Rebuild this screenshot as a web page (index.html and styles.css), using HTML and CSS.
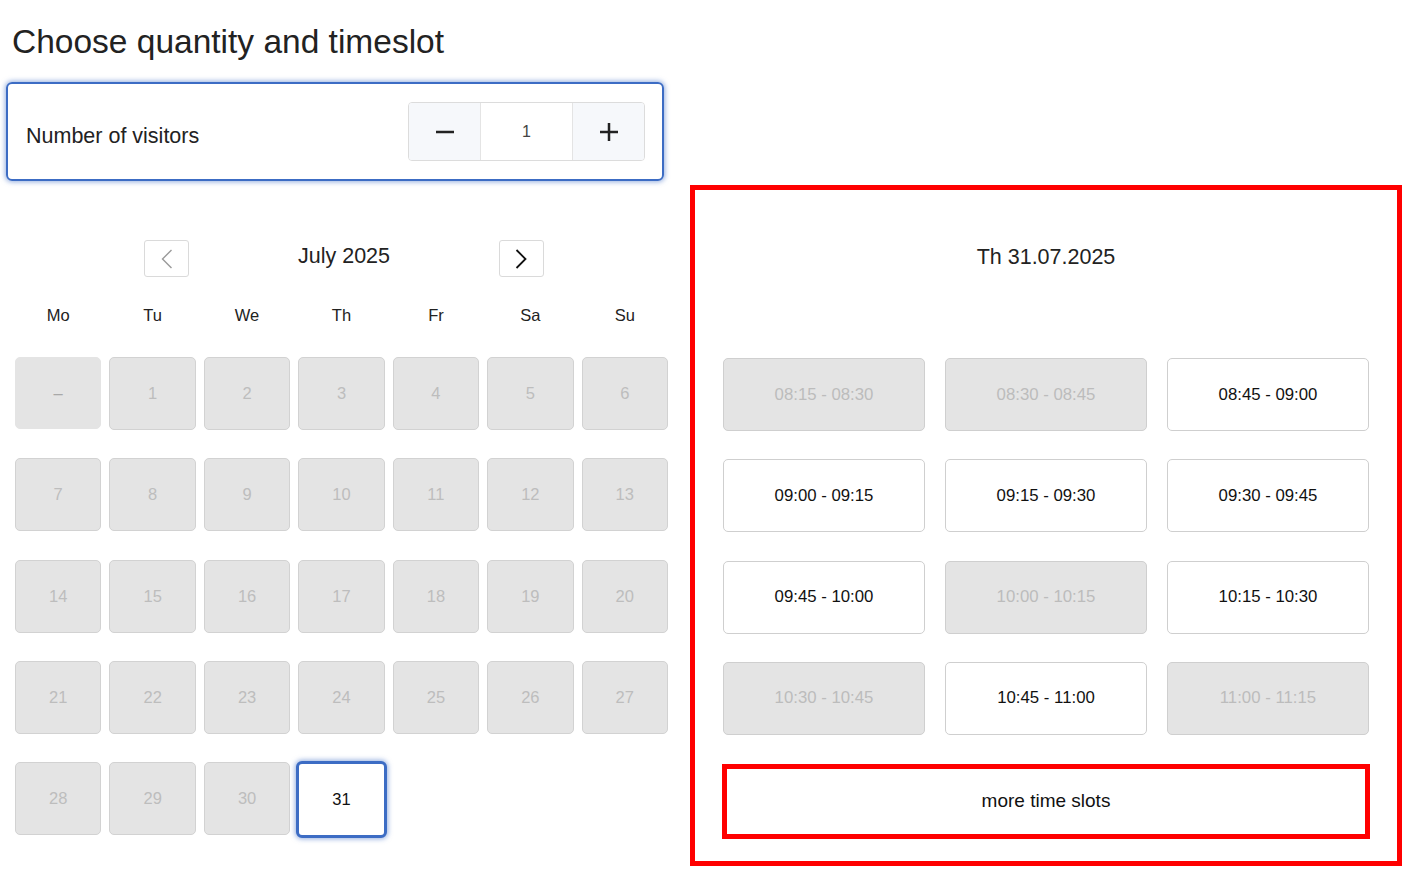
FILE: index.html
```html
<!DOCTYPE html>
<html lang="en">
  <head>
    <meta charset="UTF-8" />
    <meta name="viewport" content="width=device-width, initial-scale=1.0" />
    <title>Choose quantity and timeslot</title>
    <link rel="stylesheet" href="styles.css">
  </head>
  <body>
    <h1 class="title">Choose quantity and timeslot</h1>

    <div class="visitors">
      <span class="visitors-label">Number of visitors</span>
      <div class="stepper">
        <button class="step-btn" aria-label="decrease">
          <svg width="18" height="18" viewBox="0 0 18 18"><line x1="0" y1="9" x2="18" y2="9" stroke="#222" stroke-width="2.5"/></svg>
        </button>
        <div class="step-value">1</div>
        <button class="step-btn" aria-label="increase">
          <svg width="18" height="18" viewBox="0 0 18 18"><line x1="0" y1="9" x2="18" y2="9" stroke="#222" stroke-width="2.5"/><line x1="9" y1="0" x2="9" y2="18" stroke="#222" stroke-width="2.5"/></svg>
        </button>
      </div>
    </div>

    <div class="booking">
      <div class="calendar">
        <div class="month-nav">
          <button class="nav-btn" aria-label="previous month">
            <svg width="12" height="20" viewBox="0 0 12 20"><polyline points="10.5,1 1.5,10 10.5,19" fill="none" stroke="#9a9a9a" stroke-width="1.4"/></svg>
          </button>
          <span class="month-name">July 2025</span>
          <button class="nav-btn" aria-label="next month">
            <svg width="12" height="20" viewBox="0 0 12 20"><polyline points="1.5,1 10.5,10 1.5,19" fill="none" stroke="#111" stroke-width="1.8"/></svg>
          </button>
        </div>

        <div class="weekdays">
          <span>Mo</span><span>Tu</span><span>We</span><span>Th</span><span>Fr</span><span>Sa</span><span>Su</span>
        </div>

        <div class="days">
          <div class="day empty">–</div>
          <div class="day">1</div>
          <div class="day">2</div>
          <div class="day">3</div>
          <div class="day">4</div>
          <div class="day">5</div>
          <div class="day">6</div>
          <div class="day">7</div>
          <div class="day">8</div>
          <div class="day">9</div>
          <div class="day">10</div>
          <div class="day">11</div>
          <div class="day">12</div>
          <div class="day">13</div>
          <div class="day">14</div>
          <div class="day">15</div>
          <div class="day">16</div>
          <div class="day">17</div>
          <div class="day">18</div>
          <div class="day">19</div>
          <div class="day">20</div>
          <div class="day">21</div>
          <div class="day">22</div>
          <div class="day">23</div>
          <div class="day">24</div>
          <div class="day">25</div>
          <div class="day">26</div>
          <div class="day">27</div>
          <div class="day">28</div>
          <div class="day">29</div>
          <div class="day">30</div>
          <div class="day selected">31</div>
        </div>
      </div>

      <div class="slots-panel">
        <div class="slots-date">Th 31.07.2025</div>
        <div class="slots">
          <div class="slot disabled">08:15 - 08:30</div>
          <div class="slot disabled">08:30 - 08:45</div>
          <div class="slot">08:45 - 09:00</div>
          <div class="slot">09:00 - 09:15</div>
          <div class="slot">09:15 - 09:30</div>
          <div class="slot">09:30 - 09:45</div>
          <div class="slot">09:45 - 10:00</div>
          <div class="slot disabled">10:00 - 10:15</div>
          <div class="slot">10:15 - 10:30</div>
          <div class="slot disabled">10:30 - 10:45</div>
          <div class="slot">10:45 - 11:00</div>
          <div class="slot disabled">11:00 - 11:15</div>
        </div>
        <button class="more-slots">more time slots</button>
      </div>
    </div>
  </body>
</html>
```

FILE: styles.css
```css
body {
  margin: 0;
  font-family: "Liberation Sans", Arial, sans-serif;
  color: #222;
  background: #fff;
}

button {
  font-family: inherit;
  cursor: pointer;
}

.title {
  margin: 0 0 20px 0;
  padding: 22px 0 0 12px;
  font-size: 33.5px;
  font-weight: normal;
  line-height: 40px;
  color: #222;
}

.visitors {
  margin-left: 6px;
  width: 658px;
  box-sizing: border-box;
  height: 99px;
  padding: 18px 17px 18px 18px;
  border: 2px solid #3c6cc4;
  border-radius: 6px;
  box-shadow: 0 0 5px 1px rgba(60, 108, 196, 0.55);
  display: flex;
  align-items: center;
  justify-content: space-between;
}

.visitors-label {
  font-size: 21.5px;
  color: #222;
  padding-top: 10px;
}

.stepper {
  display: flex;
  height: 59px;
  border: 1px solid #dcdcdc;
  border-radius: 4px;
  box-sizing: border-box;
  overflow: hidden;
}

.step-btn {
  width: 71px;
  border: none;
  background: #f6f8fb;
  display: flex;
  align-items: center;
  justify-content: center;
  padding: 0;
}

.step-value {
  width: 91px;
  border-left: 1px solid #e4e4e4;
  border-right: 1px solid #e4e4e4;
  display: flex;
  align-items: center;
  justify-content: center;
  font-size: 16px;
  color: #444;
  background: #fff;
}

.booking {
  display: flex;
  margin-top: 4px;
}

.calendar {
  width: 690px;
  padding-top: 55px;
  box-sizing: border-box;
}

.month-nav {
  width: 400px;
  margin-left: 144px;
  height: 37px;
  display: flex;
  align-items: center;
  justify-content: space-between;
}

.nav-btn {
  width: 45px;
  height: 37px;
  border: 1px solid #dadada;
  border-radius: 3px;
  background: #fff;
  display: flex;
  align-items: center;
  justify-content: center;
  padding: 0;
}

.month-name {
  font-size: 21.5px;
  color: #222;
  margin-top: -4px;
}

.weekdays,
.days {
  margin-left: 15px;
  width: 653px;
  display: grid;
  grid-template-columns: repeat(7, 1fr);
  column-gap: 8px;
}

.weekdays {
  margin-top: 23px;
  margin-bottom: 27px;
  height: 30px;
  line-height: 30px;
  font-size: 16.5px;
  text-align: center;
  color: #222;
}

.days {
  row-gap: 28.25px;
}

.day {
  height: 73px;
  box-sizing: border-box;
  border: 1px solid #d2d2d2;
  border-radius: 5px;
  background: #e4e4e4;
  color: #bdbdbd;
  font-size: 16.5px;
  display: flex;
  align-items: center;
  justify-content: center;
}

.day.empty {
  border-color: #e4e4e4;
  color: #a8a8a8;
  height: 72px;
}

.day.selected {
  background: #fff;
  color: #111;
  border: 3px solid #3c6cc4;
  border-radius: 6px;
  box-shadow: 0 0 5px 1px rgba(60, 108, 196, 0.55);
  height: 77px;
  margin: -1px -2px 0 -2px;
}

.slots-panel {
  width: 712px;
  height: 681px;
  box-sizing: border-box;
  border: 5px solid #ff0000;
  padding: 52px 28px 0 28px;
}

.slots-date {
  height: 30px;
  line-height: 30px;
  text-align: center;
  font-size: 21.5px;
  color: #222;
}

.slots {
  margin-top: 86px;
  display: grid;
  grid-template-columns: repeat(3, 1fr);
  column-gap: 20px;
  row-gap: 28.3px;
}

.slot {
  height: 73px;
  box-sizing: border-box;
  border: 1px solid #cfcfcf;
  border-radius: 5px;
  background: #fff;
  color: #111;
  font-size: 16.8px;
  display: flex;
  align-items: center;
  justify-content: center;
}

.slot.disabled {
  background: #e4e4e4;
  color: #bcbcbc;
}

.more-slots {
  display: block;
  margin: 29px -1px 0 -1px;
  width: calc(100% + 2px);
  height: 75px;
  border: 5px solid #ff0000;
  background: #fff;
  color: #111;
  font-size: 19px;
}
```
